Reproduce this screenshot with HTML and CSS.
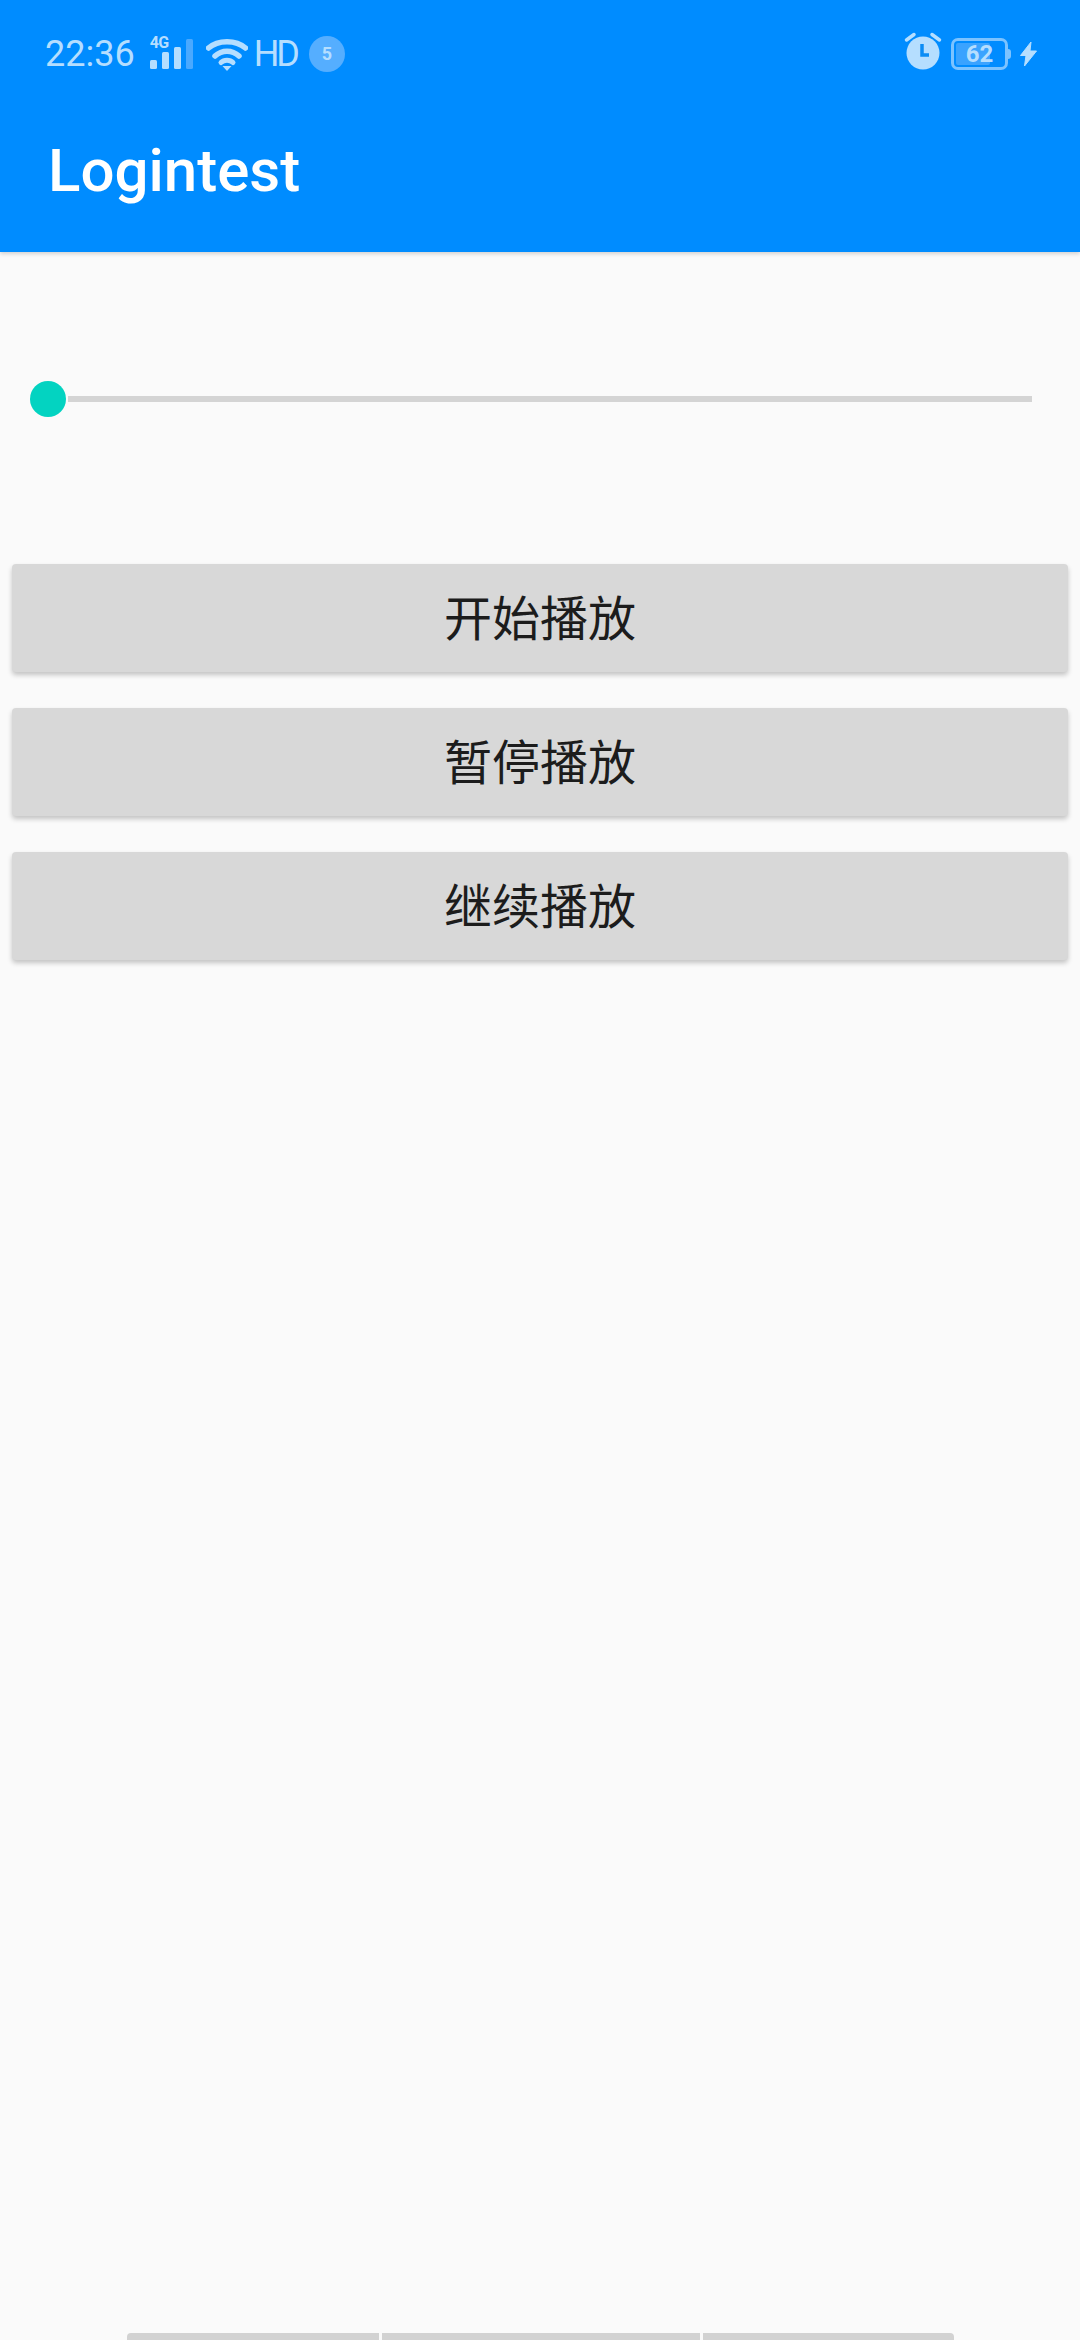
FILE: index.html
```html
<!DOCTYPE html>
<html lang="zh">
<head>
<meta charset="utf-8">
<title>Logintest</title>
<link rel="stylesheet" href="styles.css">
</head>
<body>
<div class="page">
  <header class="appbar">
    <div class="status">
      <div class="status-left">
        <span class="time">22:36</span>
        <div class="signal">
          <span class="net">4G</span>
          <svg class="bars" width="44" height="31" viewBox="0 0 44 31"><rect x="0" y="21" width="7" height="9" rx="1.5" fill="#b5deff"/><rect x="12" y="13" width="7" height="17" rx="1.5" fill="#b5deff"/><rect x="24" y="8" width="7" height="22" rx="1.5" fill="#b5deff"/><rect x="36" y="0" width="7" height="30" rx="1.5" fill="#4aa9ff"/></svg>
        </div>
        <svg class="wifi" width="42" height="33" viewBox="0 0 42 33"><path d="M2.500 10 C12 1.500 30 1.500 39.500 10" fill="none" stroke="#b5deff" stroke-width="5.500" stroke-linecap="round"/><path d="M9 18 C16 11.500 26 11.500 33 18" fill="none" stroke="#b5deff" stroke-width="5.500" stroke-linecap="round"/><path d="M15 24.500 C18 21.500 24 21.500 27 24.500" fill="none" stroke="#b5deff" stroke-width="5" stroke-linecap="round"/><path d="M16.500 28 H25.500 L21 33 Z" fill="#b5deff"/></svg>
        <span class="hd">HD</span>
        <span class="badge">5</span>
      </div>
      <div class="status-right">
        <svg class="alarm" width="38" height="38" viewBox="0 0 38 38"><circle cx="19" cy="21" r="16.5" fill="#b5deff"/><path d="M18 12 V23 H25" fill="none" stroke="#0a8cf5" stroke-width="3.500"/><path d="M2.500 8 L10 2.500 M35.500 8 L28 2.500" stroke="#b5deff" stroke-width="3.500" stroke-linecap="round"/></svg>
        <div class="battery">
          <div class="battery-body">
            <div class="battery-fill"></div>
            <span class="battery-text">62</span>
          </div>
          <div class="battery-tip"></div>
        </div>
        <svg class="bolt" width="17" height="24" viewBox="0 0 17 24"><path d="M11 0 L0.500 13.500 H6 L4.500 24 L16.500 9 H10 Z" fill="#b5deff" stroke="#b5deff" stroke-width="1" stroke-linejoin="round"/></svg>
      </div>
    </div>
    <div class="toolbar">
      <h1 class="title">Logintest</h1>
    </div>
  </header>
  <main class="content">
    <div class="slider">
      <div class="thumb"></div>
      <div class="track"></div>
    </div>
    <div class="actions">
      <button class="action">开始播放</button>
      <button class="action">暂停播放</button>
      <button class="action">继续播放</button>
    </div>
  </main>
  <div class="nav-strip">
    <div class="nav-seg seg-a"></div>
    <div class="nav-seg seg-b"></div>
    <div class="nav-seg seg-c"></div>
  </div>
</div>
</body>
</html>
```

FILE: styles.css
```css
* { box-sizing: border-box; }
html, body { margin: 0; padding: 0; }
body {
  background: #fafafa;
  font-family: Roboto, "Noto Sans CJK SC", sans-serif;
}
.page {
  width: 1080px;
  height: 2340px;
  display: flex;
  flex-direction: column;
  overflow: hidden;
}
.appbar {
  height: 252px;
  background: #008cff;
  color: #fff;
  box-shadow: 0 2px 4px rgba(0,0,0,.16);
}
.status {
  height: 108px;
  display: flex;
  justify-content: space-between;
  align-items: center;
  padding: 0 43px 0 45px;
  color: #b5deff;
}
.status-left, .status-right { display: flex; align-items: center; }
.time { font-size: 36px; line-height: 40px; }
.signal { position: relative; margin-left: 15px; width: 44px; height: 31px; }
.net {
  position: absolute;
  left: 0;
  top: -4px;
  font-size: 16px;
  line-height: 16px;
  font-weight: 700;
  letter-spacing: -.5px;
}
.bars { display: block; }
.wifi { margin-left: 12px; }
.hd { margin-left: 6px; font-size: 36px; line-height: 40px; letter-spacing: -3px; }
.badge {
  margin-left: 12px;
  width: 36px;
  height: 36px;
  border-radius: 50%;
  background: #55aeff;
  font-size: 18px;
  font-weight: 700;
  line-height: 36px;
  text-align: center;
}
.alarm { margin-top: -6px; }
.battery { display: flex; align-items: center; margin-left: 9px; }
.battery-body {
  position: relative;
  width: 57px;
  height: 32px;
  border: 3px solid #7cc3ff;
  border-radius: 7px;
  overflow: hidden;
}
.battery-fill {
  position: absolute;
  left: 2px;
  top: 2px;
  bottom: 2px;
  width: 34px;
  background: #3aa3ff;
  border-radius: 2px;
}
.battery-text {
  position: relative;
  display: block;
  font-size: 24px;
  font-weight: 700;
  line-height: 26px;
  text-align: center;
}
.battery-tip { width: 3px; height: 10px; background: #7cc3ff; border-radius: 0 3px 3px 0; }
.bolt { margin-left: 9px; }
.toolbar { height: 144px; display: flex; align-items: center; padding: 0 0 18px 48px; }
.title { margin: 0; font-size: 60px; font-weight: 500; line-height: 72px; }
.content { flex: 1; }
.slider {
  margin-top: 129px;
  padding: 0 48px 0 30px;
  display: flex;
  align-items: center;
  gap: 2px;
}
.thumb { width: 36px; height: 36px; border-radius: 50%; background: #03d3c1; flex: none; }
.track { flex: 1; height: 6px; background: #d4d4d4; }
.actions {
  margin-top: 147px;
  padding: 0 12px;
  display: flex;
  flex-direction: column;
  gap: 36px;
}
.action {
  height: 108px;
  border: 0;
  border-radius: 4px;
  background: #d8d8d8;
  color: #1c1c1c;
  font-family: "Noto Sans CJK SC", sans-serif;
  font-size: 48px;
  font-weight: 400;
  padding: 0 0 7px;
  box-shadow: 0 3px 5px rgba(0,0,0,.22);
}
.nav-strip {
  height: 7px;
  display: flex;
  justify-content: center;
  gap: 3px;
}
.nav-seg { background: #d2d2d2; height: 7px; }
.seg-a { width: 252px; border-radius: 4px 0 0 0; }
.seg-b { width: 318px; }
.seg-c { width: 251px; border-radius: 0 4px 0 0; }
```
